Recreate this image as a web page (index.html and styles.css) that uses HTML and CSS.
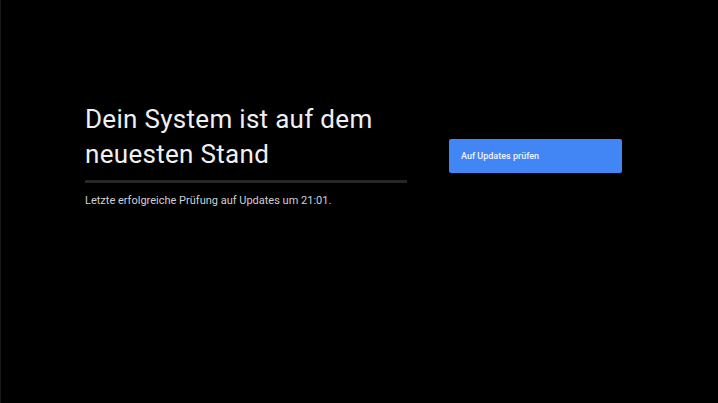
FILE: index.html
```html
<!DOCTYPE html>
<html lang="de">
<head>
<meta charset="utf-8">
<link rel="stylesheet" href="styles.css">
</head>
<body>
<div class="screen">
  <div class="content">
    <div class="info">
      <h1 class="title">Dein System ist auf dem neuesten Stand</h1>
      <div class="divider"></div>
      <p class="status">Letzte erfolgreiche Prüfung auf Updates um 21:01.</p>
    </div>
    <div class="actions">
      <button class="btn">Auf Updates prüfen</button>
    </div>
  </div>
</div>
</body>
</html>
```
FILE: styles.css
```css
html, body {
  margin: 0;
  padding: 0;
  background: #000;
  width: 718px;
  height: 403px;
  overflow: hidden;
}
.screen {
  width: 718px;
  height: 403px;
  box-sizing: border-box;
  border-left: 1px solid #1a1a1a;
  font-family: Roboto, "Noto Sans", sans-serif;
}
.content {
  display: flex;
  padding: 102px 0 0 84px;
  gap: 42px;
}
.info {
  width: 322px;
}
.title {
  margin: 0;
  font-weight: 400;
  font-size: 26px;
  line-height: 35px;
  color: #f0f0f0;
  letter-spacing: 0.3px;
}
.divider {
  height: 3px;
  background: #262626;
  margin-top: 8px;
}
.status {
  margin: 11px 0 0;
  font-size: 11px;
  line-height: 14px;
  color: #d0d0d0;
}
.actions {
  padding-top: 37px;
}
.btn {
  width: 173px;
  height: 34px;
  border: none;
  border-radius: 2px;
  background: #4285f4;
  color: #f0f4ff;
  font-family: Roboto, sans-serif;
  font-size: 9px;
  font-weight: 500;
  text-align: left;
  padding: 0 12px;
}
```
